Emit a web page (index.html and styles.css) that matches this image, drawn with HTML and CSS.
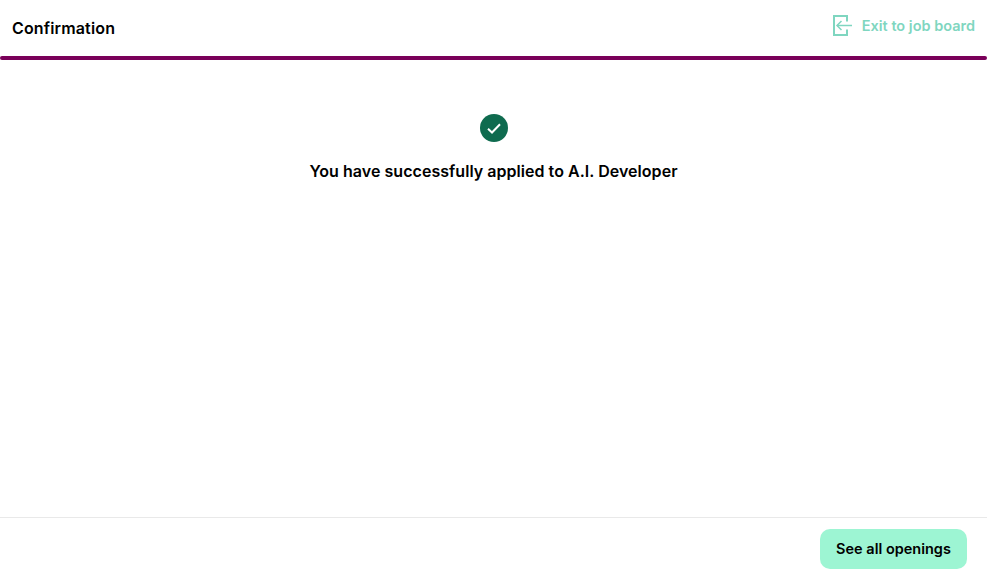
FILE: index.html
```html
<!DOCTYPE html>
<html lang="en">
<head>
  <meta charset="UTF-8" />
  <meta name="viewport" content="width=device-width, initial-scale=1.0"/>
  <title>Confirmation</title>
  <link rel="stylesheet" href="styles.css">
</head>
<body>
  <div class="page">
    <header class="top-bar">
      <h1 class="page-title">Confirmation</h1>
      <a class="exit-link" href="#">
        <svg class="exit-icon" width="19" height="21" viewBox="0 0 19 21" fill="none" stroke="currentColor">
          <path stroke-width="2" d="M14 6.5V1H1V20H14V14.5"/>
          <path stroke-width="1.5" d="M19 10.5H4"/>
          <path stroke-width="1.5" d="M8.5 6L4 10.5L8.5 15"/>
        </svg>
        <span>Exit to job board</span>
      </a>
    </header>
    <div class="progress"></div>
    <main class="content">
      <div class="check">
        <svg width="14" height="11" viewBox="0 0 14 11" fill="none" stroke="#fff" stroke-width="2">
          <path d="M1 5.8L5 9.5L13 1.2"/>
        </svg>
      </div>
      <p class="message">You have successfully applied to A.I. Developer</p>
    </main>
    <footer class="bottom-bar">
      <button class="openings-btn">See all openings</button>
    </footer>
  </div>
</body>
</html>
```

FILE: styles.css
```css
html, body {
  margin: 0;
  padding: 0;
  height: 100%;
}
body {
  font-family: Inter, "Liberation Sans", sans-serif;
  background: white;
  color: #000;
  overflow: hidden;
}
.page {
  display: flex;
  flex-direction: column;
  height: 100vh;
}
.top-bar {
  display: flex;
  align-items: center;
  justify-content: space-between;
  height: 56px;
  padding: 0 12px;
}
.page-title {
  margin: 0;
  font-size: 16px;
  font-weight: 600;
  letter-spacing: 0.15px;
}
.exit-link {
  display: flex;
  align-items: center;
  gap: 10px;
  color: #7fd6c0;
  font-size: 14.5px;
  font-weight: 600;
  text-decoration: none;
  margin-bottom: 6px;
}
.exit-icon {
  display: block;
}
.progress {
  height: 4px;
  background: #7a0059;
  border-radius: 2px;
}
.content {
  flex: 1;
  display: flex;
  flex-direction: column;
  align-items: center;
  padding-top: 54px;
}
.check {
  display: flex;
  align-items: center;
  justify-content: center;
  width: 28px;
  height: 28px;
  border-radius: 50%;
  background: #0f6b4f;
}
.message {
  margin: 19px 0 0;
  font-size: 16px;
  line-height: 20px;
  font-weight: 600;
  letter-spacing: 0.04px;
}
.bottom-bar {
  display: flex;
  justify-content: flex-end;
  align-items: flex-start;
  height: 64px;
  padding: 11px 20px 0 0;
  box-sizing: border-box;
  border-top: 1px solid #e9e9e9;
}
.openings-btn {
  width: 147px;
  height: 40px;
  padding: 0 0 2px;
  border: none;
  border-radius: 10px;
  background: #9df5d3;
  color: #000;
  font-family: inherit;
  font-size: 14.5px;
  font-weight: 600;
  cursor: pointer;
}
```
